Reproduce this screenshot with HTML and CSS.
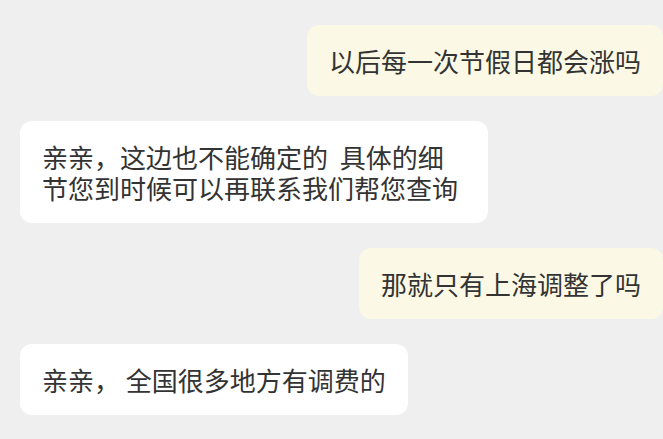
FILE: index.html
```html
<!DOCTYPE html>
<html lang="zh-CN">
<head>
  <meta charset="UTF-8">
  <meta name="viewport" content="width=device-width, initial-scale=1.0">
  <title>聊天记录</title>
  <link rel="stylesheet" href="styles.css">
</head>
<body>
  <div class="chat">
    <div class="msg msg-me">以后每一次节假日都会涨吗</div>
    <div class="msg msg-other">亲亲，这边也不能确定的&nbsp; 具体的细节您到时候可以再联系我们帮您查询</div>
    <div class="msg msg-me">那就只有上海调整了吗</div>
    <div class="msg msg-other">亲亲， 全国很多地方有调费的</div>
  </div>
</body>
</html>
```

FILE: styles.css
```css
body {
  margin: 0;
  background-color: #efefef;
  font-family: "Noto Sans CJK SC", "Noto Sans", sans-serif;
  color: #333;
}
.chat {
  display: flex;
  flex-direction: column;
  gap: 25px;
  padding: 25px 0 0 20px;
}
.msg {
  box-sizing: border-box;
  max-width: 468px;
  padding: 20px 22px;
  border-radius: 12px;
  font-size: 26px;
  line-height: 31px;
}
.msg-me {
  align-self: flex-end;
  background-color: #fbf9e5;
}
.msg-other {
  align-self: flex-start;
  background-color: #ffffff;
}
```
